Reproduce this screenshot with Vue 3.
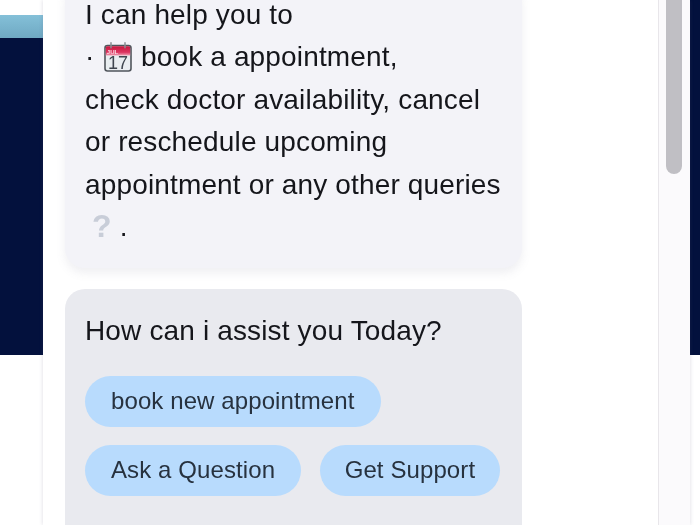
<script setup>
const actions = [
  ['book new appointment'],
  ['Ask a Question', 'Get Support'],
]
</script>

<template>
  <div class="page">
    <div class="backdrop">
      <div class="side-left">
        <div class="top"></div>
        <div class="teal"></div>
        <div class="navy"></div>
      </div>
      <div class="side-right"></div>
    </div>
    <section class="panel">
      <div class="messages">
        <div class="bubble intro">
          <div>I can help you to</div>
          <div class="calendar-line">
            <span class="dot">·</span>
            <svg class="calendar" viewBox="0 0 28 30" aria-hidden="true">
              <defs>
                <linearGradient id="cal-head" x1="0" y1="0" x2="0" y2="1">
                  <stop offset="0" stop-color="#c8173f" />
                  <stop offset="0.65" stop-color="#dc3560" />
                  <stop offset="1" stop-color="#f0a0b4" />
                </linearGradient>
              </defs>
              <rect x="1" y="3.500" width="26" height="25.500" rx="2.500" fill="#e9eef1" stroke="#50555c" stroke-width="1.600" />
              <path d="M1.800 13.500V5.800A1.500 1.500 0 0 1 3.300 4.300h21.400A1.500 1.500 0 0 1 26.200 5.800V13.500Z" fill="url(#cal-head)" />
              <path d="M7 0.800v5M21 0.800v5" stroke="#8a8d93" stroke-width="1.500" stroke-linecap="round" />
              <text x="8.500" y="11.500" class="month">JUL</text>
              <text x="14" y="27.300" class="day">17</text>
            </svg>
            <span>book a appointment,</span>
          </div>
          <div>check doctor availability, cancel</div>
          <div>or reschedule upcoming</div>
          <div>appointment or any other queries</div>
          <div class="question-line"><span class="question">?</span><span>.</span></div>
        </div>
        <div class="bubble prompt">
          <div>How can i assist you Today?</div>
          <div class="actions">
            <div v-for="(row, i) in actions" :key="i" class="action-row">
              <button v-for="label in row" :key="label" class="chip" type="button">{{ label }}</button>
            </div>
          </div>
        </div>
      </div>
      <div class="track"><div class="thumb"></div></div>
    </section>
  </div>
</template>

<style>
html, body { margin: 0; background: #fff; }
</style>

<style scoped>
.page {
  position: relative;
  width: 700px;
  height: 525px;
  overflow: hidden;
  background: #fff;
  font-family: "Liberation Sans", Arial, sans-serif;
  color: #15161b;
  filter: blur(0.35px);
}
.backdrop { display: flex; justify-content: space-between; height: 355px; }
.side-left { width: 43px; display: flex; flex-direction: column; }
.side-right { width: 10px; background: #03113d; }
.top { height: 15px; background: #fff; }
.teal { height: 23px; background: linear-gradient(#84c0d8, #6fa9c3); }
.navy { flex: 1; background: #03113d; }
.panel {
  position: absolute;
  left: 43px;
  top: 0;
  width: 647px;
  height: 525px;
  display: flex;
  background: #fff;
  box-shadow: 0 0 4px rgba(90, 80, 120, 0.22);
}
.messages {
  flex: 1;
  min-width: 0;
  padding-left: 22px;
  display: flex;
  flex-direction: column;
  gap: 21px;
  margin-top: -21px;
}
.bubble {
  width: 457px;
  box-sizing: border-box;
  padding: 15px 20px 20px;
  border-radius: 20px;
  font-size: 28px;
  letter-spacing: 0.15px;
  line-height: 42.400px;
  flex: none;
}
.intro {
  background: #f3f3f8;
  box-shadow: 0 5px 10px rgba(120, 120, 150, 0.12);
}
.prompt {
  background: #e9eaef;
  padding-top: 21px;
  padding-bottom: 60px;
}
.calendar-line { display: flex; align-items: center; }
.dot { width: 19px; }
.calendar { width: 28px; height: 30px; margin-right: 9px; margin-top: -2px; }
.month { font-size: 6px; font-weight: 700; letter-spacing: 0; fill: #fbdde4; text-anchor: middle; font-family: "Liberation Sans", sans-serif; }
.day { font-size: 18px; letter-spacing: 0; fill: #3f464f; text-anchor: middle; font-family: "Liberation Sans", sans-serif; }
.question-line { display: flex; align-items: center; height: 42.400px; padding-left: 7px; }
.question { font-weight: 700; font-size: 32px; color: #c8cdd8; margin-right: 8px; margin-top: -3px; }
.actions {
  margin-top: 23px;
  display: flex;
  flex-direction: column;
  gap: 18px;
}
.action-row { display: flex; gap: 19px; }
.chip {
  height: 51px;
  padding: 0 26px;
  border: 0;
  border-radius: 26px;
  background: #b8dbfd;
  color: #27323f;
  font: 24px "Liberation Sans", Arial, sans-serif;
  letter-spacing: 0.1px;
  white-space: nowrap;
}
.chip:nth-child(2) { padding: 0 24.500px; }
.track {
  width: 32px;
  flex: none;
  box-sizing: border-box;
  padding-left: 7px;
  background: #fbfafc;
  border-left: 1px solid #e8e6ea;
}
.thumb {
  width: 16px;
  height: 174px;
  border-radius: 0 0 8px 8px;
  background: #c0bfc4;
}
</style>
